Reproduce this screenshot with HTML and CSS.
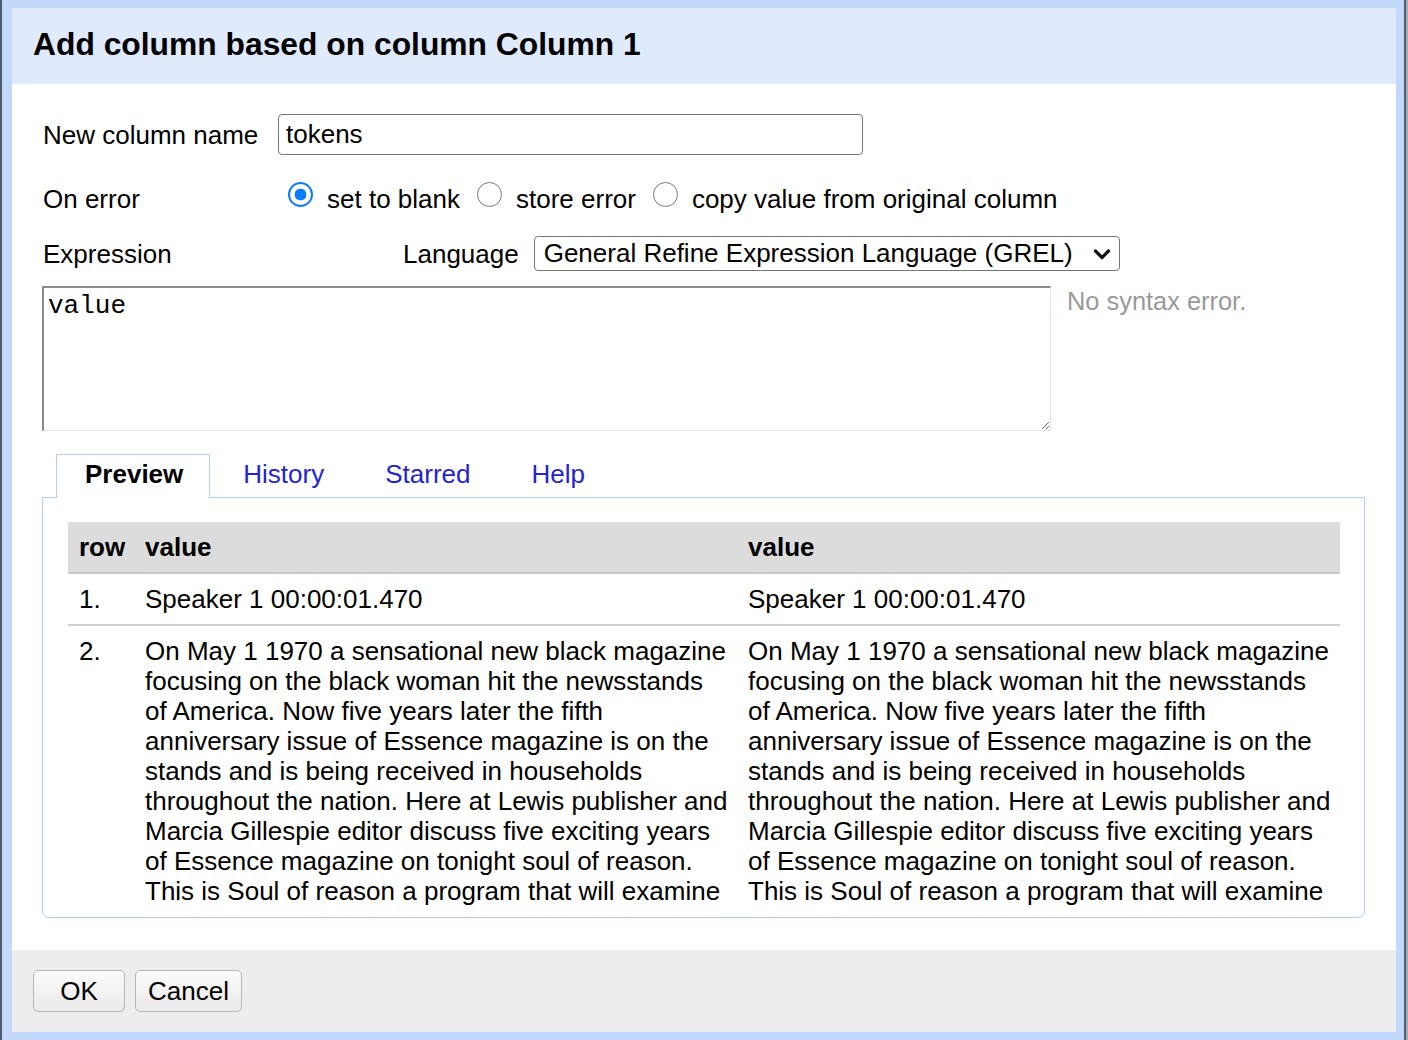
FILE: index.html
```html
<!DOCTYPE html>
<html lang="en">
<head>
<meta charset="utf-8">
<title>Add column based on column Column 1</title>
<link rel="stylesheet" href="styles.css">
</head>
<body>
<div class="edge edge-dark"></div>
<div class="dialog">
  <div class="dialog-header"><h1 class="dialog-title">Add column based on column Column 1</h1></div>
  <div class="dialog-body">
    <div class="row row-name">
      <label class="label" for="colname">New column name</label>
      <input id="colname" class="text-input" type="text" value="tokens">
    </div>
    <div class="row row-error">
      <span class="label">On error</span>
      <label class="choice"><input class="radio radio-first" type="radio" name="onerror" checked>set to blank</label>
      <label class="choice"><input class="radio" type="radio" name="onerror">store error</label>
      <label class="choice"><input class="radio" type="radio" name="onerror">copy value from original column</label>
    </div>
    <div class="row row-expr">
      <span class="label label-expr">Expression</span>
      <span class="lang-label">Language</span>
      <div class="select" role="combobox">
        <span class="select-text">General Refine Expression Language (GREL)</span>
        <svg class="chevron" width="18" height="12" viewBox="0 0 18 12"><polyline points="2.5,3 9,9.5 15.5,3" fill="none" stroke="#111" stroke-width="3.2" stroke-linecap="round" stroke-linejoin="round"/></svg>
      </div>
    </div>
    <div class="row row-code">
      <textarea class="code" spellcheck="false">value</textarea>
      <div class="status">No syntax error.</div>
    </div>
    <div class="tabs">
      <div class="tab-list">
        <span class="tab tab-active">Preview</span>
        <a class="tab" href="#">History</a>
        <a class="tab" href="#">Starred</a>
        <a class="tab" href="#">Help</a>
      </div>
      <div class="tab-panel">
        <div class="preview">
          <table class="preview-table">
            <colgroup><col class="c-row"><col class="c-val"><col class="c-val"></colgroup>
            <thead>
              <tr><th>row</th><th>value</th><th>value</th></tr>
            </thead>
            <tbody>
              <tr><td>1.</td><td>Speaker 1 00:00:01.470</td><td>Speaker 1 00:00:01.470</td></tr>
              <tr><td>2.</td><td>On May 1 1970 a sensational new black magazine focusing on the black woman hit the newsstands of America. Now five years later the fifth anniversary issue of Essence magazine is on the stands and is being received in households throughout the nation. Here at Lewis publisher and Marcia Gillespie editor discuss five exciting years of Essence magazine on tonight soul of reason. This is Soul of reason a program that will examine</td><td>On May 1 1970 a sensational new black magazine focusing on the black woman hit the newsstands of America. Now five years later the fifth anniversary issue of Essence magazine is on the stands and is being received in households throughout the nation. Here at Lewis publisher and Marcia Gillespie editor discuss five exciting years of Essence magazine on tonight soul of reason. This is Soul of reason a program that will examine</td></tr>
            </tbody>
          </table>
        </div>
      </div>
    </div>
  </div>
  <div class="dialog-footer">
    <button class="button button-ok" type="button">OK</button>
    <button class="button" type="button">Cancel</button>
  </div>
</div>
<div class="edge edge-dark"></div>
<div class="edge edge-gray"></div>
</body>
</html>
```
FILE: styles.css
```css
* { box-sizing: border-box; }

html, body {
  margin: 0;
  padding: 0;
  height: 100%;
}

body {
  display: flex;
  width: 1408px;
  height: 1040px;
  overflow: hidden;
  background: #4f5d71;
  font-family: "Liberation Sans", Arial, Helvetica, sans-serif;
  font-size: 26px;
  color: #000;
}

.edge { width: 2px; flex: none; }
.edge-dark { background: #4f5d71; }
.edge-gray { background: #a9abae; }

.dialog {
  width: 1402px;
  flex: none;
  display: flex;
  flex-direction: column;
  border-style: solid;
  border-color: #c3d9fc;
  border-width: 8px 8px 8px 10px;
  background: #fff;
}

.dialog-header {
  height: 76px;
  flex: none;
  display: flex;
  align-items: center;
  padding: 0 21px 4px;
  background: #dfeafd;
}

.dialog-title {
  margin: 0;
  font-size: 31.8px;
  font-weight: bold;
  line-height: 40px;
}

.dialog-body {
  flex: 1;
  padding: 30px 30px 0 30px;
  background: #fff;
}

.row {
  display: flex;
  align-items: center;
}

.label {
  width: 236px;
  flex: none;
  padding-left: 1px;
  line-height: 30px;
}

.row-name { height: 41px; }

.text-input {
  width: 585px;
  height: 41px;
  border: 1px solid #767676;
  border-radius: 4px;
  padding: 0 7px;
  font-family: inherit;
  font-size: 26px;
  color: #000;
  background: #fff;
}

.row-error {
  height: 32px;
  margin-top: 28px;
}

.choice {
  display: flex;
  align-items: center;
  line-height: 30px;
}

.radio {
  appearance: none;
  -webkit-appearance: none;
  width: 25px;
  height: 25px;
  margin: 0 14px 0 17px;
  border: 1.5px solid #7a7a7a;
  border-radius: 50%;
  background: #fff;
  position: relative;
  top: -5px;
}

.radio-first { margin-left: 10px; }

.radio:checked {
  border: 2.5px solid #0b7bff;
  background: radial-gradient(circle, #0b7bff 0 5.6px, #fff 6.2px);
}

.row-expr {
  height: 35px;
  margin-top: 21px;
}

.label-expr { width: 361px; }

.lang-label {
  line-height: 30px;
  margin-right: 15px;
}

.select {
  width: 586px;
  height: 35px;
  display: flex;
  align-items: center;
  justify-content: space-between;
  padding: 0 8px 0 9px;
  border: 1px solid #767676;
  border-radius: 4px;
  background: #fff;
  white-space: nowrap;
}

.chevron { flex: none; }

.row-code {
  align-items: flex-start;
  margin-top: 15px;
}

.code {
  width: 1009px;
  height: 145px;
  margin: 0;
  padding: 3px 4px;
  border-style: solid;
  border-width: 2px 1px 1px 2px;
  border-color: #8a8a8a #e3e3e3 #e3e3e3 #8a8a8a;
  font-family: "Liberation Mono", "Courier New", monospace;
  font-size: 26px;
  line-height: 30px;
  color: #000;
  resize: both;
  outline: none;
}

.status {
  margin-left: 16px;
  font-size: 25.4px;
  line-height: 30px;
  color: #999;
}

.tabs { margin-top: 23px; }

.tab-list {
  display: flex;
  gap: 5px;
  padding-left: 14px;
  position: relative;
  z-index: 1;
  margin-bottom: -1px;
}

.tab {
  padding: 4px 27px 9px;
  line-height: 30px;
  color: #2323d4;
  text-decoration: none;
  border: 1px solid transparent;
  border-bottom: none;
}

.tab-active {
  color: #000;
  font-weight: bold;
  background: #fff;
  border-color: #b4cbf8;
  padding-left: 28px;
  padding-right: 26px;
}

.tab-panel {
  width: 1323px;
  height: 421px;
  padding: 24px 24px 8px 25px;
  border: 1px solid #b4cbf8;
  border-radius: 0 0 7px 7px;
  background: #fff;
}

.preview {
  height: 100%;
  overflow: hidden;
}

.preview-table {
  width: 1272px;
  table-layout: fixed;
  border-collapse: collapse;
}

.c-row { width: 66px; }
.c-val { width: 603px; }

.preview-table th,
.preview-table td {
  padding: 10px 8px 10px 11px;
  line-height: 30px;
  text-align: left;
  vertical-align: top;
}

.preview-table th {
  background: #dcdcdc;
  font-weight: bold;
  border-bottom: 2px solid #c9c9c9;
}

.preview-table tbody tr:first-child td {
  border-bottom: 2px solid #cfcfcf;
}

.dialog-footer {
  height: 82px;
  flex: none;
  display: flex;
  align-items: center;
  gap: 10px;
  padding: 0 21px;
  background: #ededed;
}

.button {
  height: 42px;
  padding: 0 12px;
  font-family: inherit;
  font-size: 26px;
  color: #000;
  border: 1px solid #b6b6b6;
  border-radius: 5px;
  background: linear-gradient(#fbfbfb, #e9e9e9);
}

.button-ok { min-width: 92px; }
```
